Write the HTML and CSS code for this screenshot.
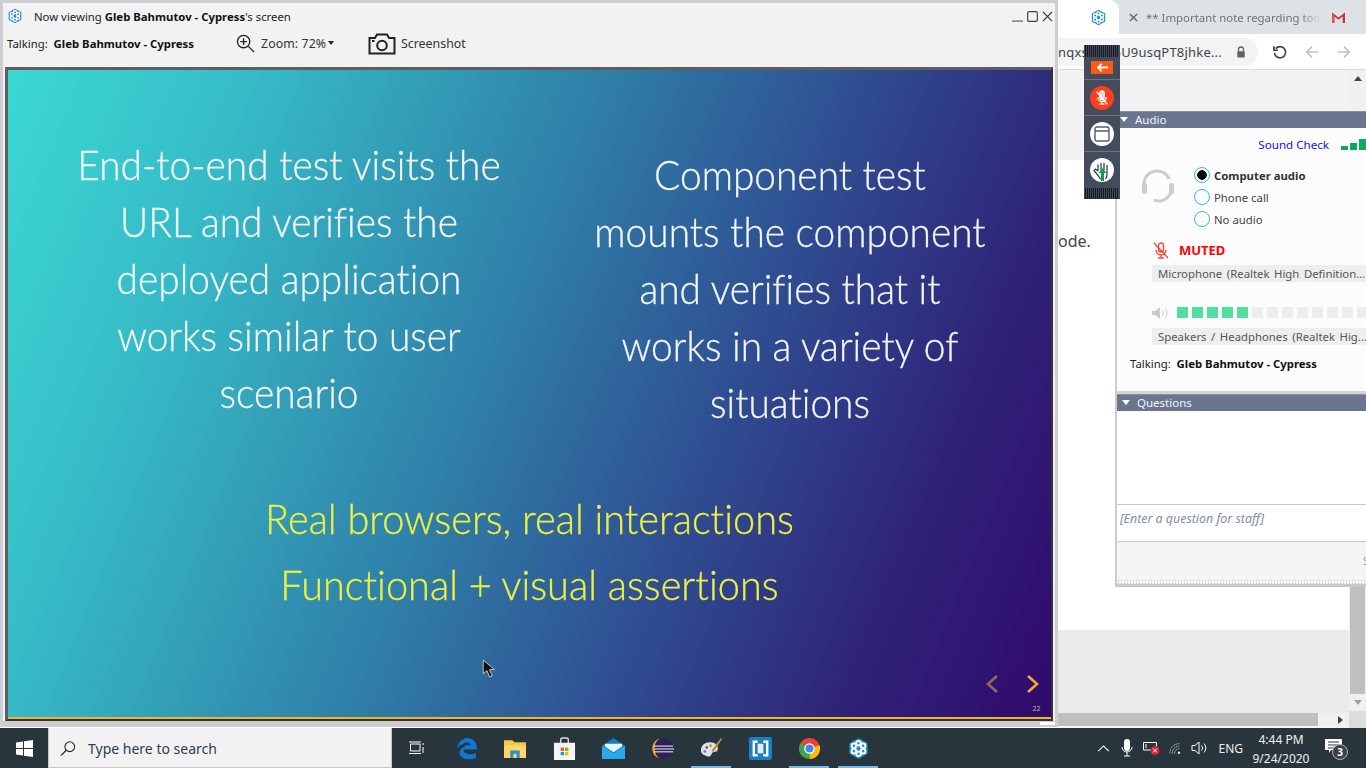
FILE: index.html
```html
<!DOCTYPE html>
<html lang="en">
<head>
<meta charset="utf-8">
<title>Now viewing Gleb Bahmutov - Cypress's screen</title>
<link rel="stylesheet" href="styles.css">
</head>
<body>
<svg class="defs" width="0" height="0" aria-hidden="true">
  <symbol id="snow" viewBox="0 0 24 24">
    <path d="M12 1 21.5 6.5V17.5L12 23 2.5 17.5V6.5Z" fill="#1d8fc4"/>
    <g fill="none" stroke="#fff" stroke-width="2">
      <circle cx="12" cy="6.5" r="2.4"/><circle cx="12" cy="17.5" r="2.4"/>
      <circle cx="7.2" cy="9.2" r="2.4"/><circle cx="16.8" cy="9.2" r="2.4"/>
      <circle cx="7.2" cy="14.8" r="2.4"/><circle cx="16.8" cy="14.8" r="2.4"/>
    </g>
  </symbol>
</svg>
<div class="desktop">
  <section class="browser">
    <div class="tabstrip">
      <div class="tab-active"><svg class="tab-snow"><use href="#snow"/></svg></div>
      <div class="tab-other">
        <svg class="tab-x" viewBox="0 0 10 10"><path d="M1 1 9 9M9 1 1 9" stroke="#666" stroke-width="1.600"/></svg>
        <span class="tab-title">** Important note regarding toda</span>
        <svg class="gmail" viewBox="0 0 16 14"><path d="M1 13V1.5L8 7 15 1.5V13H12.5V6L8 9.5 3.5 6V13Z" fill="#c5372c"/><path d="M3.5 6V13H1V1.5Z" fill="#d9584d"/></svg>
      </div>
    </div>
    <div class="addressbar">
      <div class="urlpill">
        <span class="urltext"><span>nqxs</span><span>5U9usqPT8jhke...</span></span>
        <svg class="lock" viewBox="0 0 12 14"><path d="M3 6V4a3 3 0 0 1 6 0v2" fill="none" stroke="#5f6368" stroke-width="1.6"/><rect x="1.5" y="6" width="9" height="7.5" rx="1" fill="#5f6368"/></svg>
      </div>
      <svg class="nav" viewBox="0 0 18 18"><path d="M4.2 5.2A6.3 6.3 0 1 1 2.8 9.8" fill="none" stroke="#444" stroke-width="1.9"/><path d="M2.2 2.5V7H6.7" fill="none" stroke="#444" stroke-width="1.9"/></svg>
      <svg class="nav" viewBox="0 0 18 18"><path d="M16 9H3M9 3 3 9l6 6" fill="none" stroke="#bdc1c6" stroke-width="1.8"/></svg>
      <svg class="nav" viewBox="0 0 18 18"><path d="M2 9H15M9 3l6 6-6 6" fill="none" stroke="#bdc1c6" stroke-width="1.8"/></svg>
    </div>
    <div class="pagearea">
      <div class="pagecol">
        <div class="page-top"></div>
        <div class="page-white"><span class="page-word">ode.</span></div>
        <div class="page-bottom"></div>
        <div class="hscroll"><div class="hthumb"></div><div class="harrow"><i class="tri-right"></i></div></div>
        <div class="hgap"></div>
      </div>
      <div class="vscroll">
        <div class="varrow"><i class="tri-up"></i></div>
        <div class="vtrack"></div>
        <div class="vthumb"></div>
        <div class="varrow"><i class="tri-down"></i></div>
        <div class="vcorner"></div>
      </div>
    </div>
  </section>

  <aside class="panel">
    <div class="phead ahead"><i class="tri-white"></i>Audio</div>
    <div class="audio">
      <div class="soundcheck"><span class="sc-link">Sound Check</span><span class="bars"><i class="b1"></i><i class="b2"></i><i class="b3"></i></span></div>
      <div class="choice">
        <svg class="headset" viewBox="0 0 36 36"><path d="M5 21A13 13 0 0 1 29 11" fill="none" stroke="#c9cdd2" stroke-width="3"/><path d="M31 16A13 13 0 0 1 14 32" fill="none" stroke="#c9cdd2" stroke-width="3"/><rect x="2" y="15" width="5" height="11" rx="2.5" fill="#c9cdd2"/><rect x="29" y="15" width="5" height="11" rx="2.5" fill="#c9cdd2"/></svg>
        <div class="radios">
          <div class="radio-row"><i class="radio on"></i><b class="strong">Computer audio</b></div>
          <div class="radio-row"><i class="radio"></i>Phone call</div>
          <div class="radio-row"><i class="radio"></i>No audio</div>
        </div>
      </div>
      <div class="muted">
        <svg class="mic-red" viewBox="0 0 16 17"><g fill="none" stroke="#e8503a" stroke-width="1.4"><rect x="5.5" y="1" width="5" height="9" rx="2.5"/><path d="M3 8a5 5 0 0 0 10 0M8 13v3M5 16h6M1 1l14 15"/></g></svg>
        <span class="muted-text">MUTED</span>
      </div>
      <div class="device">Microphone (Realtek High Definition...</div>
      <div class="meter">
        <svg class="spk" viewBox="0 0 17 12"><path d="M0 4H3L8 0V12L3 8H0Z" fill="#c8ccd0"/><path d="M10 3a4 4 0 0 1 0 6M13 1a7 7 0 0 1 0 10" fill="none" stroke="#c8ccd0"/></svg>
        <i class="lv on"></i><i class="lv on"></i><i class="lv on"></i><i class="lv on"></i><i class="lv on"></i><i class="lv"></i><i class="lv"></i><i class="lv"></i><i class="lv"></i><i class="lv"></i><i class="lv"></i><i class="lv"></i><i class="lv"></i>
      </div>
      <div class="device dev2">Speakers / Headphones (Realtek Hig...</div>
      <div class="talk-side">Talking:&nbsp; <b class="strong2">Gleb Bahmutov - Cypress</b></div>
    </div>
    <div class="phead qhead"><i class="tri-white"></i>Questions</div>
    <div class="qlist"></div>
    <div class="qinput">[Enter a question for staff]</div>
    <div class="qfoot"><span class="sendstub">S</span></div>
    <div class="qgrip"></div>
  </aside>

  <nav class="floatbar">
    <div class="grip"></div>
    <div class="fb-cell fb-arrow"><span class="orange"><svg viewBox="0 0 14 10" class="arr"><path d="M13 5H2M6 1 2 5l4 4" fill="none" stroke="#fff" stroke-width="2"/></svg></span></div>
    <div class="fb-cell"><span class="roundbtn redbtn"><svg viewBox="0 0 16 18" class="ri"><g fill="none" stroke="#fff" stroke-width="1.4"><rect x="5.5" y="1" width="5" height="10" rx="2.5" fill="#ffc9bd"/><path d="M3 8a5 5 0 0 0 10 0M8 13v3M5 16h6M2 2l12 14"/></g></svg></span></div>
    <div class="fb-cell"><span class="roundbtn"><svg viewBox="0 0 16 16" class="ri"><rect x="1" y="1" width="14" height="14" rx="2" fill="none" stroke="#555c6b" stroke-width="1.4"/><path d="M1 5H15" stroke="#555c6b" stroke-width="1.4"/></svg></span></div>
    <div class="fb-cell fb-last"><span class="roundbtn"><svg viewBox="0 0 20 20" class="ri-hand"><path d="M6 10V3.500M9 9V2M12 9V2M15 10V4M6 10 3.500 8 2 9.500 6.500 15Q8 18 9 18M15 10V14Q15 16 13.500 18" fill="none" stroke="#3a3f4a" stroke-width="1.300"/><path d="M10.500 7 6.500 12H9V20H12V12H14.500Z" fill="#0f9d4f"/></svg></span></div>
    <div class="grip grip-b"></div>
  </nav>

  <main class="viewer">
    <header class="vtitle">
      <svg class="vlogo"><use href="#snow"/></svg>
      <span class="vt-text">Now viewing <b class="strong2">Gleb Bahmutov - Cypress</b>'s screen</span>
      <div class="winctl">
        <svg viewBox="0 0 12 12" class="wc"><path d="M0 11H12" stroke="#333" stroke-width="1"/></svg>
        <svg viewBox="0 0 12 12" class="wc"><rect x=".7" y=".7" width="10.600" height="10.600" rx="1.500" fill="none" stroke="#444" stroke-width="1.300"/></svg>
        <svg viewBox="0 0 12 12" class="wc"><path d="M1 1 11 11M11 1 1 11" stroke="#333" stroke-width="1.300"/></svg>
      </div>
    </header>
    <div class="vtools">
      <span class="talking">Talking:&nbsp; <b class="strong2">Gleb Bahmutov - Cypress</b></span>
      <span class="zoom">
        <svg viewBox="0 0 20 20" class="zi"><circle cx="8" cy="8" r="6.500" fill="none" stroke="#222" stroke-width="1.400"/><path d="M8 4.500v7M4.500 8h7" stroke="#222" stroke-width="1.400"/><path d="M13 13l6 6" stroke="#222" stroke-width="1.400"/></svg>
        <span class="zt">Zoom: 72%</span><i class="tri-dark"></i>
      </span>
      <span class="shot">
        <svg viewBox="0 0 28 22" class="cam"><path d="M1.500 5H7L9 1.500H19L21 5H26.500V20.500H1.500Z" fill="none" stroke="#222" stroke-width="2"/><circle cx="14" cy="12.500" r="4.800" fill="none" stroke="#222" stroke-width="2"/><rect x="4" y="7" width="2.500" height="2" fill="#222"/></svg>
        <span>Screenshot</span>
      </span>
    </div>
    <div class="slideframe">
      <div class="slide">
        <div class="columns">
          <p class="col col-l">End-to-end test visits the<br>URL and verifies the<br>deployed application<br>works similar to user<br>scenario</p>
          <p class="col col-r">Component test<br>mounts the component<br>and verifies that it<br>works in a variety of<br>situations</p>
        </div>
        <p class="yellow">Real browsers, real interactions<br>Functional + visual assertions</p>
        <svg class="cursor" viewBox="0 0 12 18"><path d="M1 1V14L4.500 11 7 17 9.500 16 7 10H11.500Z" fill="#111" stroke="#ddd" stroke-width=".8"/></svg>
        <svg class="chev chev-l" viewBox="0 0 14 20"><path d="M12 2 3 10l9 8" fill="none" stroke="#8f6a5d" stroke-width="2.600"/></svg>
        <svg class="chev chev-r" viewBox="0 0 14 20"><path d="M2 2l9 8-9 8" fill="none" stroke="#f0a92c" stroke-width="2.600"/></svg>
        <span class="pageno">22</span>
      </div>
    </div>
  </main>
</div>

<footer class="taskbar">
  <div class="start"><svg viewBox="0 0 17 17" class="win"><path d="M0 2.500 7 1.500V8H0ZM8 1.300 17 0V8H8ZM0 9H7V15.500L0 14.500ZM8 9H17V17L8 15.700Z" fill="#fff"/></svg></div>
  <div class="search">
    <svg viewBox="0 0 18 18" class="mag"><circle cx="11" cy="7" r="5.500" fill="none" stroke="#222" stroke-width="1.200"/><path d="M7 11 1 17" stroke="#222" stroke-width="1.400"/></svg>
    <span>Type here to search</span>
  </div>
  <div class="apps">
    <div class="app"><svg viewBox="0 0 16 14" class="ic-task"><path d="M2.500 3H12V10H2.500ZM1 1H13M1 12.500H13M15 2v2M15 6v6" fill="none" stroke="#fff" stroke-width="1"/></svg></div>
    <div class="app"><svg viewBox="0 0 22 22" class="ic"><path d="M2 11C3 4 8 1 12 1c6 0 9 5 9 11H8c0 4 6 6 12 3v5c-7 3-15 1-16-5 1-3 3-5 5-6 .5 0 1-1 1-1h5c0-3-5-4-8-1-2 1-3 2-5 4Z" fill="#0a78d4"/></svg></div>
    <div class="app"><svg viewBox="0 0 22 20" class="ic"><path d="M0 2H8L10 4H21V19H0Z" fill="#f5c842"/><path d="M0 7H21V19H0Z" fill="#fdd76a"/><path d="M6 19V12H15V19H12V15H9V19Z" fill="#2a8fd1"/></svg></div>
    <div class="app"><svg viewBox="0 0 22 24" class="ic"><path d="M7 7V3q0-2 2-2h4q2 0 2 2v4" fill="none" stroke="#ddd" stroke-width="1.500"/><rect x="0" y="6" width="22" height="18" fill="#f4f4f4"/><rect x="7" y="11" width="3.500" height="3.500" fill="#f25022"/><rect x="11.500" y="11" width="3.500" height="3.500" fill="#7fba00"/><rect x="7" y="15.500" width="3.500" height="3.500" fill="#00a4ef"/><rect x="11.500" y="15.500" width="3.500" height="3.500" fill="#ffb900"/></svg></div>
    <div class="app"><svg viewBox="0 0 24 22" class="ic"><path d="M0 8 12 0 24 8V22H0Z" fill="#0f7ec9"/><path d="M0 8 12 16 24 8V22H0Z" fill="#2aa9ea"/><path d="M3 6H21V9L12 15 3 9Z" fill="#e8f6fd"/></svg></div>
    <div class="app"><svg viewBox="0 0 24 24" class="ic"><circle cx="12.500" cy="12" r="11" fill="#2c2255"/><path d="M9 1.500A11 11 0 0 0 9 22.500 13 13 0 0 1 9 1.500Z" fill="#f7941e"/><path d="M3 9.500H23M3 12.500H24M3 15.500H23" stroke="#fff" stroke-width="1"/></svg></div>
    <div class="app active"><svg viewBox="0 0 24 24" class="ic"><path d="M1 14C1 7 8 4 14 6c5 2 6 7 3 9-3 1-4 0-5 3-1 3-4 3-7 1-3-1-4-3-4-5Z" fill="#dce4ea"/><circle cx="7" cy="11" r="1.500" fill="#e34"/><circle cx="11" cy="9" r="1.500" fill="#7b4"/><circle cx="5" cy="15" r="1.500" fill="#39d"/><path d="M12 14 22 1l1 1-9 14Z" fill="#c68a3c"/></svg></div>
    <div class="app"><svg viewBox="0 0 24 24" class="ic"><rect width="24" height="24" rx="2" fill="#1b80c2"/><path d="M9 5H5V19H9M15 5H19V19H15" fill="none" stroke="#fff" stroke-width="2.500"/><rect x="9" y="7" width="6" height="10" fill="#e6eef3"/></svg></div>
    <div class="app active"><svg viewBox="0 0 24 24" class="ic"><circle cx="12" cy="12" r="11" fill="#ea4335"/><path d="M12 12 22.500 8.500A11 11 0 0 1 12 23Z" fill="#fbbc05"/><path d="M12 23A11 11 0 0 1 2.500 6.500L12 12Z" fill="#34a853"/><circle cx="12" cy="12" r="5.500" fill="#fff"/><circle cx="12" cy="12" r="4.200" fill="#4285f4"/></svg></div>
    <div class="app active"><svg class="ic"><use href="#snow"/></svg></div>
  </div>
  <div class="tray">
    <svg viewBox="0 0 14 8" class="t-caret"><path d="M1 7 7 1l6 6" fill="none" stroke="#fff" stroke-width="1.200"/></svg>
    <svg viewBox="0 0 12 18" class="t-mic"><rect x="3" y="0" width="6" height="12" rx="3" fill="#fff"/><path d="M1 8a5 5 0 0 0 10 0M6 13v4M3 17h6" fill="none" stroke="#fff"/></svg>
    <svg viewBox="0 0 17 14" class="t-bat"><path d="M.5 1.500H13.500V9H.5ZM3 3v4" fill="none" stroke="#fff"/><circle cx="12" cy="9.500" r="4.500" fill="#d3232b"/><path d="M10 7.500l4 4M14 7.500l-4 4" stroke="#fff"/></svg>
    <svg viewBox="0 0 16 14" class="t-wifi"><path d="M1 13A12 12 0 0 1 13 1M4 13A9 9 0 0 1 13 4M7 13A6 6 0 0 1 13 7" fill="none" stroke="#dfe3e6" stroke-dasharray="1.500 .8"/><rect x="11" y="11" width="2.500" height="2.500" fill="#fff"/></svg>
    <svg viewBox="0 0 17 14" class="t-vol"><path d="M1 4.500H4L8 1V13L4 9.500H1Z" fill="none" stroke="#fff"/><path d="M10.500 4.500a3.500 3.500 0 0 1 0 5M13 2.500a6.500 6.500 0 0 1 0 9" fill="none" stroke="#fff"/></svg>
    <span class="t-lang">ENG</span>
    <span class="t-clock"><span>4:44 PM</span><span>9/24/2020</span></span>
    <span class="t-note"><svg viewBox="0 0 17 15" class="t-noteic"><path d="M0 0H17V11H6L4 14V11H0Z" fill="#fff"/><path d="M3 3H14M3 6H14M3 9H14" stroke="#29353c"/></svg><span class="t-badge">3</span></span>
  </div>
</footer>
</body>
</html>
```
FILE: styles.css
```css
* { box-sizing: border-box; }
html, body { margin: 0; padding: 0; }
body { width: 1366px; height: 768px; overflow: hidden; font-family: "Noto Sans", "Open Sans", sans-serif; font-size: 11.35px; color: #222; display: flex; flex-direction: column; }
.defs { position: absolute; }
b { font-weight: 700; }
i { display: block; font-style: normal; }

.desktop { position: relative; height: 728px; flex: none; background: #fff; overflow: hidden; }

/* background browser */
.browser { position: absolute; left: 1058px; top: 0; width: 308px; height: 728px; display: flex; flex-direction: column; background: #fff; }
.tabstrip { height: 34px; flex: none; background: #dee1e6; display: flex; }
.tab-active { width: 61px; background: #fff; border-radius: 0 10px 0 0; display: flex; align-items: center; justify-content: flex-end; padding-right: 12px; }
.tab-snow { width: 17px; height: 17px; }
.tab-other { flex: 1; display: flex; align-items: center; padding-left: 10px; min-width: 0; }
.tab-x { width: 9px; height: 9px; margin-right: 8px; flex: none; }
.tab-title { font-size: 11.4px; color: #6f7276; white-space: nowrap; width: 175px; overflow: hidden; flex: none; -webkit-mask-image: linear-gradient(90deg, #000 88%, transparent); mask-image: linear-gradient(90deg, #000 88%, transparent); }
.gmail { width: 15px; height: 13px; margin-left: 10px; flex: none; }
.addressbar { height: 36px; flex: none; display: flex; align-items: center; background: #fff; border-bottom: 1px solid #dcdcdc; }
.urlpill { width: 200px; height: 28px; background: #f1f3f4; border-radius: 0 14px 14px 0; display: flex; align-items: center; padding-right: 12px; }
.urltext { font-size: 13px; color: #444; flex: 1; white-space: nowrap; letter-spacing: .2px; display: flex; justify-content: space-between; padding-right: 14px; }
.lock { width: 10px; height: 12px; flex: none; }
.nav { width: 16px; height: 16px; flex: none; margin-left: 16px; }
.urlpill + .nav { margin-left: 14px; }
.pagearea { flex: 1; display: flex; min-height: 0; }
.pagecol { flex: 1; display: flex; flex-direction: column; min-width: 0; }
.page-top { height: 90px; background: #f2f2f2; flex: none; }
.page-white { height: 470px; background: #fff; flex: none; }
.page-word { display: block; margin-top: 71px; font-size: 16px; color: #444; line-height: 20px; }
.page-bottom { flex: 1; background: #e9ebea; }
.hscroll { height: 13px; flex: none; display: flex; background: #f0f0f0; }
.hgap { height: 2px; flex: none; background: #f5f5f5; }
.hthumb { width: 260px; background: #bfbfbf; }
.harrow { flex: 1; display: flex; align-items: center; justify-content: flex-end; padding-right: 6px; }
.tri-right { width: 0; height: 0; border-left: 5px solid #444; border-top: 4px solid transparent; border-bottom: 4px solid transparent; }
.vscroll { width: 17px; flex: none; display: flex; flex-direction: column; background: #f0f0f0; }
.varrow { height: 17px; display: flex; align-items: center; justify-content: center; flex: none; }
.tri-up { width: 0; height: 0; border-bottom: 5px solid #444; border-left: 4px solid transparent; border-right: 4px solid transparent; }
.tri-down { width: 0; height: 0; border-top: 5px solid #a0a0a0; border-left: 4px solid transparent; border-right: 4px solid transparent; }
.vtrack { height: 60px; background: #f0f0f0; flex: none; }
.vthumb { flex: 1; background: #bfbfbf; margin: 0 1px; }
.vcorner { height: 17px; background: #dcdcdc; flex: none; }

/* audio panel */
.panel { position: absolute; left: 1115px; top: 111px; width: 251px; height: 476px; background: #fff; border-left: 2px solid #c9ccd1; border-bottom: 3px solid #c8c8c8; display: flex; flex-direction: column; }
.phead { height: 17px; flex: none; background: #6a7690; color: #f4f5f7; font-size: 11.5px; line-height: 15px; display: flex; align-items: center; gap: 7px; padding: 0 0 1px 5px; border-top: 1px solid #8a8f9c; }
.ahead { padding-left: 3px; gap: 7px; }
.tri-white { width: 0; height: 0; border-top: 5px solid #fff; border-left: 4.500px solid transparent; border-right: 4.500px solid transparent; }
.audio { height: 266px; flex: none; background: #fcfcfc; border-bottom: 3px solid #d4d4d4; }
.soundcheck { display: flex; justify-content: flex-end; align-items: flex-end; height: 17px; margin-top: 8px; gap: 12px; }
.sc-link { color: #1414e6; font-size: 11.6px; line-height: 17px; }
.bars { display: flex; align-items: flex-end; gap: 2px; width: 25px; flex: none; height: 11px; margin-bottom: 3px; }
.bars i { background: #10a860; flex: none; width: 7px; }
.b1 { height: 4px; }
.b2 { height: 7px; }
.b3 { height: 11px; }
.choice { display: flex; margin-top: 11px; height: 66px; }
.headset { width: 36px; height: 36px; margin: 4px 0 0 23px; flex: none; }
.radios { margin-left: 18px; display: flex; flex-direction: column; }
.radio-row { height: 22px; display: flex; align-items: center; gap: 4px; font-size: 11.35px; color: #444; }
.radio { width: 16px; height: 16px; border-radius: 50%; border: 1.500px solid #2fb8ec; background: #fff; flex: none; }
.radio.on { background: radial-gradient(circle, #000 0 4.500px, #fff 5px); }
.strong { color: #333; font-weight: 700; }
.muted { display: flex; align-items: center; margin: 10px 0 0 36px; gap: 10px; height: 20px; }
.mic-red { width: 16px; height: 17px; flex: none; }
.muted-text { color: #f00; font-weight: 700; font-size: 13px; }
.device { margin: 5px 0 0 35px; height: 17px; background: #eeeeee; color: #555; font-size: 11.35px; line-height: 17px; padding-left: 6px; white-space: nowrap; word-spacing: 1.6px; }
.meter { display: flex; align-items: center; margin: 25px 0 0 35px; gap: 4px; height: 11px; }
.spk { width: 17px; height: 12px; margin-right: 4px; flex: none; }
.lv { width: 11px; height: 11px; background: #eceeee; flex: none; }
.lv.on { background: #52dea1; }
.dev2 { margin-top: 10px; }
.talk-side { margin: 10px 0 0 13px; font-size: 11.35px; line-height: 17px; color: #222; }
.strong2 { font-weight: 700; color: #111; }
.qlist { height: 94px; flex: none; background: #fff; border-bottom: 1px solid #c8c8c8; }
.qinput { height: 37px; flex: none; border-bottom: 1px solid #c8c8d0; padding: 5px 0 0 3px; font-style: italic; color: #7e8ea6; font-size: 12.4px; line-height: 18px; }
.qfoot { flex: 1; background: #f5f5f5; display: flex; justify-content: flex-end; align-items: center; }
.sendstub { font-size: 11px; color: #999; width: 3px; overflow: hidden; }
.qgrip { height: 5px; flex: none; background: radial-gradient(circle, #bbb 0 .6px, #f5f5f5 1px) 0 0 / 3px 3px; }

/* floating bar */
.floatbar { position: absolute; left: 1084px; top: 45px; width: 36px; height: 154px; background: #434b5c; display: flex; flex-direction: column; }
.grip { height: 12px; flex: none; background: repeating-linear-gradient(90deg, #14171d 0 1px, #434b5c 1px 2px); margin: 0 1px; }
.grip-b { height: 11px; }
.fb-cell { height: 36px; flex: none; display: flex; align-items: center; justify-content: center; border-bottom: 1px solid #6b7383; }
.fb-arrow { height: 23px; padding-bottom: 2px; }
.fb-last { border-bottom: 0; }
.orange { width: 22px; height: 13px; background: #ff5a14; display: flex; align-items: center; justify-content: center; }
.arr { width: 13px; height: 9px; }
.roundbtn { width: 24px; height: 24px; border-radius: 50%; background: #fff; display: flex; align-items: center; justify-content: center; overflow: hidden; }
.redbtn { background: #ff3d1f; }
.ri { width: 16px; height: 16px; }
.ri-hand { width: 20px; height: 20px; margin-top: 2px; }

/* viewer window */
.viewer { position: absolute; left: 0; top: 0; width: 1058px; height: 727px; background: #f2f2f2; border: 3px solid #ccced3; border-bottom-width: 6px; display: flex; flex-direction: column; }
.viewer::after { content: ""; position: absolute; right: 0; bottom: -4px; width: 15px; height: 3px; background: #fff; }
.vtitle { height: 26px; flex: none; display: flex; align-items: center; padding-left: 4px; color: #222; }
.vlogo { width: 16px; height: 16px; flex: none; }
.vt-text { margin-left: 11px; }
.winctl { margin-left: auto; display: flex; gap: 4px; padding-right: 2px; }
.wc { width: 11px; height: 11px; }
.vtools { height: 38px; flex: none; display: flex; align-items: center; padding: 0 0 10px 4px; }
.talking { width: 229px; flex: none; white-space: nowrap; }
.zoom { display: flex; align-items: center; width: 132px; flex: none; font-size: 12.300px; }
.zi { width: 19px; height: 19px; flex: none; margin-right: 6px; }
.zt { color: #333; letter-spacing: .1px; }
.tri-dark { width: 0; height: 0; border-top: 4px solid #222; border-left: 3.500px solid transparent; border-right: 3.500px solid transparent; margin-left: 2px; }
.shot { display: flex; align-items: center; gap: 5px; color: #333; font-size: 12.400px; }
.cam { width: 28px; height: 22px; flex: none; margin-top: 2px; }
.slideframe { flex: none; width: 1048px; height: 654px; margin-left: 2px; background: #fff; border: 2px solid #333; border-top: 3px solid #5e5e5e; border-left: 3px solid #5e5e5e; }
.slide { position: relative; width: 100%; height: 100%; background: linear-gradient(112deg, #3bd9d4 0%, #36b9c6 20%, #2f7fa8 46%, #2f4f92 65%, #2f2278 84%, #31096e 100%); border-bottom: 2px solid #f0b52a; display: flex; flex-direction: column; overflow: hidden; }
.columns { display: flex; flex: none; }
.col { margin: 0; font-family: "Lato", sans-serif; font-weight: 300; font-variant-ligatures: none; font-size: 42px; line-height: 57px; color: #f2f6f6; -webkit-text-stroke: .3px #f2f6f6; text-align: center; transform: scaleX(.925); flex: none; }
.col-l { width: 562px; padding-top: 66px; }
.col-r { width: 440px; padding-top: 76px; }
.yellow { margin: 54px 0 0; font-family: "Lato", sans-serif; font-weight: 300; font-variant-ligatures: none; font-size: 42px; line-height: 66px; color: #eef142; -webkit-text-stroke: .3px #eef142; text-align: center; transform: scaleX(.945); }
.cursor { position: absolute; left: 474px; top: 589px; width: 13px; height: 19px; }
.chev { position: absolute; top: 603px; width: 14px; height: 22px; }
.chev-l { left: 977px; }
.chev-r { left: 1018px; }
.pageno { position: absolute; left: 1022px; top: 632px; width: 13px; height: 13px; background: #2a0f63; color: #c0bcd6; font-size: 7px; line-height: 13px; text-align: center; }

/* taskbar */
.taskbar { height: 40px; flex: none; background: #29353c; display: flex; align-items: stretch; color: #fff; }
.start { width: 48px; flex: none; display: flex; align-items: center; justify-content: center; }
.win { width: 17px; height: 17px; }
.search { width: 344px; flex: none; background: #f2f2f2; border: 1px solid #c8c8c8; border-top: 0; display: flex; align-items: center; padding: 1px 0 0 11px; gap: 12px; color: #2c3e50; font-size: 14px; }
.mag { width: 16px; height: 17px; flex: none; }
.apps { display: flex; margin-left: 1px; }
.app { width: 49px; flex: none; display: flex; align-items: center; justify-content: center; position: relative; }
.app.active::after { content: ""; position: absolute; left: 4px; right: 5px; bottom: 0; height: 2px; background: #76b9ed; }
.ic { width: 23px; height: 23px; }
.ic-task { width: 16px; height: 14px; margin-right: 4px; }
.tray { flex: 1; display: flex; align-items: center; justify-content: flex-end; }
.t-caret { width: 13px; height: 7px; margin-right: 11px; flex: none; }
.t-mic { width: 12px; height: 18px; margin-right: 10px; flex: none; }
.t-bat { width: 17px; height: 14px; margin-right: 9px; flex: none; }
.t-wifi { width: 13px; height: 13px; margin-right: 9px; flex: none; }
.t-vol { width: 17px; height: 14px; margin-right: 10px; flex: none; }
.t-lang { font-size: 12px; color: #f0f0f0; margin-right: 7px; }
.t-clock { display: flex; flex-direction: column; align-items: center; font-size: 12px; line-height: 19px; color: #f0f0f0; width: 62px; margin-right: 13px; padding-top: 1px; }
.t-note { position: relative; width: 25px; height: 25px; margin-right: 16px; flex: none; }
.t-noteic { width: 17px; height: 15px; position: absolute; left: 0; top: 3px; }
.t-badge { position: absolute; left: 7px; top: 8px; width: 16px; height: 16px; border-radius: 50%; background: #3a4248; border: 1px solid #b0b4b8; color: #fff; font-size: 10px; line-height: 14px; text-align: center; font-weight: 700; }
```
